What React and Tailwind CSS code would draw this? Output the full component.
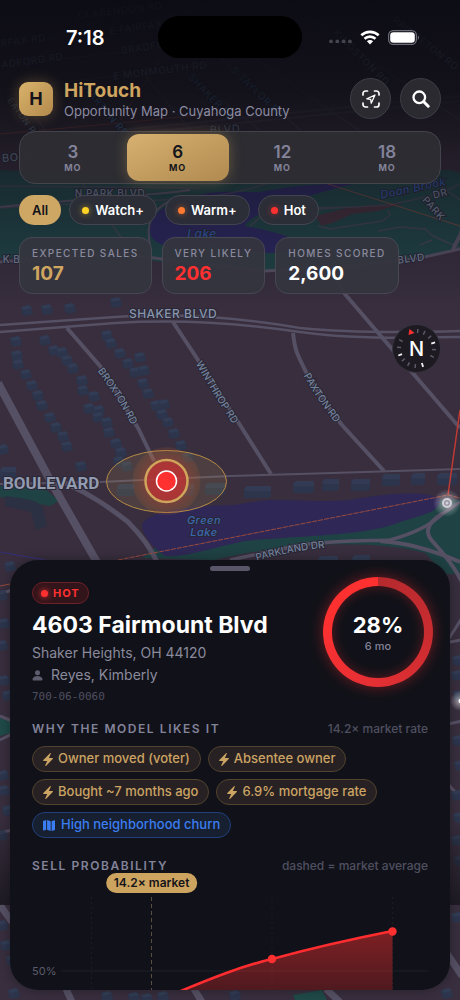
import React from "react";

const BUILDINGS = [
  [21, 305], [41, 304], [64, 303], [110, 297],
  [10, 336], [11, 350], [12, 359], [20, 369], [26, 380], [32, 390], [36, 400], [44, 412], [50, 422], [57, 431], [61, 441],
  [39, 335], [48, 345], [56, 347], [61, 355], [67, 363], [76, 375], [77, 385], [88, 391], [83, 403], [93, 405], [92, 412], [101, 417], [103, 427], [110, 438], [115, 447], [113, 456], [121, 461],
  [101, 330], [105, 338], [114, 348], [122, 358], [134, 352], [129, 367], [138, 365], [137, 378], [142, 388], [150, 400], [158, 399], [156, 409], [162, 417], [168, 428], [175, 440], [182, 452],
  [-3, 444], [75, 461], [4, 561], [-2, 468],
  [-4, 590], [-2, 618], [-4, 640], [-2, 675], [2, 690], [-3, 770], [-2, 785], [2, 805], [-4, 830],
  [452, 655], [451, 670], [453, 690], [452, 735], [454, 760], [451, 790], [453, 812], [451, 835], [454, 855],
  [-4, 920], [0, 940], [6, 955], [8, 988], [101, 991], [128, 992], [141, 993], [157, 991], [229, 990], [441, 988], [451, 912],
];

const LONG_BUILDINGS = [
  [244, 486, 27], [293, 481, 21], [322, 479, 17], [351, 479, 19], [382, 474, 18], [411, 473, 14], [437, 473, 20],
  [117, 484, 17], [205, 483, 20], [180, 484, 14], [0, 467, 16], [318, 556, 20], [352, 555, 18],
];

function MapLabel({ x, y, r = 0, size = 10, className = "fill-[#73839c]", italic, children }) {
  return (
    <text
      x={x}
      y={y}
      transform={`rotate(${r} ${x} ${y})`}
      fontSize={size}
      fontWeight="500"
      fontStyle={italic ? "italic" : "normal"}
      textAnchor="middle"
      dominantBaseline="central"
      letterSpacing="0.5"
      className={className}
      stroke="#2a2736"
      strokeWidth="2"
      paintOrder="stroke"
    >
      {children}
    </text>
  );
}

function CityMap() {
  return (
    <svg
      className="absolute inset-0 h-full w-full font-['Inter',sans-serif]"
      viewBox="0 0 460 1000"
      preserveAspectRatio="xMidYMin slice"
      role="img"
      aria-label="Map of Shaker Heights"
    >
      <defs>
        <linearGradient id="topFade" x1="0" y1="0" x2="0" y2="1">
          <stop offset="0" stopColor="#0b0b13" stopOpacity="0.96" />
          <stop offset="0.3" stopColor="#0d0d14" stopOpacity="0.86" />
          <stop offset="0.5" stopColor="#100f16" stopOpacity="0.56" />
          <stop offset="0.75" stopColor="#14131c" stopOpacity="0.3" />
          <stop offset="1" stopColor="#14131c" stopOpacity="0" />
        </linearGradient>
        <linearGradient id="lowFade" x1="0" y1="0" x2="0" y2="1">
          <stop offset="0" stopColor="#15141a" stopOpacity="0" />
          <stop offset="1" stopColor="#15141a" stopOpacity="0.75" />
        </linearGradient>
        <radialGradient id="pinGlow">
          <stop offset="0" stopColor="#ff3030" stopOpacity="0.6" />
          <stop offset="0.6" stopColor="#e0452c" stopOpacity="0.3" />
          <stop offset="1" stopColor="#c9662c" stopOpacity="0.12" />
        </radialGradient>
        <radialGradient id="whiteGlow">
          <stop offset="0.3" stopColor="#ffffff" stopOpacity="0.4" />
          <stop offset="1" stopColor="#ffffff" stopOpacity="0" />
        </radialGradient>
        <path id="broxton" d="M100 369C114 389 127 407 139 434" />
        <path id="winthrop" d="M198 362C212 385 225 408 242 432" />
        <path id="paxton" d="M306 374C316 392 326 406 343 428" />
        <path id="parkland" d="M256 558C280 551 305 546 334 544" />
      </defs>

      <rect width="460" height="1000" fill="#382e3e" />

      {/* parks and water */}
      <path d="M0 170L120 176L300 180L420 170L450 170L460 173V248L420 257L360 268L265 271C200 264 120 256 0 258Z" fill="#1f4447" />
      <path d="M315 216L350 207L403 203L378 211L352 214L335 222L322 226Z" fill="#43303d" />
      <path d="M360 182C320 184 290 186 260 192C230 192 215 190 195 196C165 202 148 216 150 232C152 248 180 250 215 246C240 252 285 258 300 246C300 238 270 230 244 226C256 210 300 198 360 182Z" fill="#2b2762" />
      <path d="M0 486L45 489L59 501L50 506L0 497Z" fill="#1f4244" />
      <path d="M142 558L165 540L280 532L440 500L460 500V574H445L425 553C380 540 290 541 215 560Z" fill="#1f4244" />
      <path d="M142 526C144 514 175 506 235 505C280 495 300 504 350 500C400 491 435 492 440 500C440 512 425 514 400 522C370 536 290 536 245 541C210 548 185 558 165 556C154 548 144 538 142 526Z" fill="#2f2856" />
      <path d="M0 718L10 722V733L0 736Z" fill="#1f4a47" />
      <path d="M293 995L322 990L327 1000H295Z" fill="#1f4a47" />
      <path d="M5 496C22 498 40 500 43 508L47 526L36 530L31 512L5 506Z" fill="#2b3043" />

      {/* minor streets */}
      <g fill="none" stroke="#4a4457" strokeWidth="1.5" opacity="0.8">
        <path d="M0 44L160 24M0 66L210 42M0 90L260 58M150 22L230 0M170 0L460 200M280 0L460 120M360 0L460 66M140 70L190 130M180 68L260 130M220 58L300 130M0 208C140 198 220 206 280 178M0 186L200 188" />
        <path d="M318 209L390 205C410 200 440 196 460 184M250 226L262 216L300 208L350 207M318 226L330 229L382 221L390 215L388 210M378 231L400 227L425 229L433 236L460 248M432 240L420 245" />
        <path d="M120 130L460 96M118 135L460 101" strokeWidth="2" />
        <path d="M20 95L130 250" />
      </g>
      <g fill="none" stroke="#565064">
        <path d="M0 207C100 197 150 196 190 190" strokeWidth="2" />
        <path d="M0 262L60 257L120 254L265 271L360 265L420 258L460 249" strokeWidth="3" />
        <path d="M150 246C146 225 150 210 172 200" strokeWidth="2" />
        <path d="M0 325L115 317C180 312 240 318 300 328C350 333 400 333 460 331M0 332L115 323C180 319 240 323 300 332C350 339 400 338 460 337" strokeWidth="2.5" />
        <path d="M67 328L100 366C115 390 128 412 138 428L154 461" strokeWidth="4" />
        <path d="M173 322L200 363L240 425L271 474" strokeWidth="4" />
        <path d="M293 333C295 350 296 352 306 372C320 396 330 410 342 425L384 471" strokeWidth="4" />
        <path d="M344 293L392 349L460 428" strokeWidth="4" />
        <path d="M0 484L100 482L230 476L300 474L460 469" strokeWidth="2" />
        <path d="M-2 383L50 480L98 564" strokeWidth="8" />
        <path d="M65 483C92 495 110 508 128 522C142 536 152 550 158 564" strokeWidth="5" />
        <path d="M230 560L300 545C340 540 370 541 390 540C412 534 430 526 442 514L460 502" strokeWidth="3.5" />
        <path d="M380 541C410 543 435 551 460 562M442 514C425 524 425 534 434 543C446 556 454 566 462 582" strokeWidth="4" />
        <path d="M0 594L12 590M0 716L12 721M0 740L12 734M0 833L12 830M448 640L462 618M450 642L462 640M448 724L462 721M448 784L462 800" strokeWidth="3" />
        <path d="M0 905L12 922M66 989L72 1002M194 989L202 1002M326 989L340 1002M446 952L462 976" strokeWidth="7" />
        <path d="M344 293L330 268M453 250C456 240 462 236 462 228" strokeWidth="4" />
      </g>

      {/* buildings */}
      <g fill="#2c354c">
        {BUILDINGS.map(([x, y], i) => (
          <g key={i} transform={`translate(${x} ${y})`}>
            <path d="M0 2L8 0L11 3L12 9L4 11L1 9Z" />
            <path d="M0 2L8 0L11 3L3 5Z" fill="#323c54" />
          </g>
        ))}
        {LONG_BUILDINGS.map(([x, y, w], i) => (
          <g key={i} transform={`translate(${x} ${y})`}>
            <path d={`M0 3L3 0H${w}V10L${w - 2} 12H0Z`} />
            <path d={`M0 3L3 0H${w}V5H1Z`} fill="#323b53" />
          </g>
        ))}
      </g>

      {/* transit lines */}
      <g fill="none" stroke="#9a4a3e" strokeWidth="1">
        <path d="M118 560L448 495L460 498" strokeDasharray="5 1" />
        <path d="M448 495L460 410" stroke="#c03a34" strokeWidth="1.5" />
        <path d="M328 184L460 226M0 134L130 122L230 112M120 120L160 60" opacity="0.7" />
        <path d="M0 552L50 561" stroke="#34307a" />
        <path d="M10 584L0 586" />
      </g>

      {/* labels */}
      <MapLabel x={120} y={10} r={-7}>CLARENDON RD</MapLabel>
      <MapLabel x={136} y={27} r={-8}>E FAIRFAX</MapLabel>
      <MapLabel x={23} y={40} r={-8}>RFAX RD</MapLabel>
      <MapLabel x={32} y={60} r={-8}>ADFORD RD</MapLabel>
      <MapLabel x={150} y={46} r={-8}>BRADFORD</MapLabel>
      <MapLabel x={160} y={70} r={-7}>E MONMOUTH RD</MapLabel>
      <MapLabel x={362} y={57} r={45}>KINGSTON RD</MapLabel>
      <MapLabel x={426} y={43} r={38}>PRINCETON RD</MapLabel>
      <MapLabel x={258} y={92} r={44} className="fill-[#4a78a8]">S TAYLOR RD</MapLabel>
      <MapLabel x={212} y={97} r={46} className="fill-[#4a78a8]">SHAKER RD</MapLabel>
      <MapLabel x={106} y={110} r={50} className="fill-[#4a78a8]">WARTON RD</MapLabel>
      <MapLabel x={24} y={118} r={54} size={9}>EATON RD</MapLabel>
      <MapLabel x={225} y={129} r={-3} size={11}>BLVD</MapLabel>
      <MapLabel x={18} y={157} r={-4} size={11}>BOUL</MapLabel>
      <MapLabel x={110} y={193}>N PARK BLVD</MapLabel>
      <MapLabel x={413} y={188} r={-12} size={11} italic className="fill-[#2b5aa8]">Doan Brook</MapLabel>
      <MapLabel x={202} y={233} size={12} italic className="fill-[#2d5ab0]">Lake</MapLabel>
      <MapLabel x={440} y={193} r={-16}>DR</MapLabel>
      <MapLabel x={434} y={208} r={48}>PARK</MapLabel>
      <MapLabel x={22} y={259}>K BLVD</MapLabel>
      <MapLabel x={411} y={258} r={-7}>BLVD</MapLabel>
      <MapLabel x={173} y={313} size={12} className="fill-[#8796ad]">SHAKER BLVD</MapLabel>
      <MapLabel x={204} y={520} size={11} italic className="fill-[#3a68ae]">Green</MapLabel>
      <MapLabel x={204} y={532} size={11} italic className="fill-[#3a68ae]">Lake</MapLabel>
      <text x="3" y="489" fontSize="17" fontWeight="700" className="fill-[#929bb0] font-['Roboto',sans-serif]" stroke="#2a2736" strokeWidth="2" paintOrder="stroke">
        BOULEVARD
      </text>
      <g fontSize="10" fontWeight="500" fill="#73839c" stroke="#2a2736" strokeWidth="2" paintOrder="stroke">
        <text dy="3"><textPath href="#broxton">BROXTON RD</textPath></text>
        <text dy="3"><textPath href="#winthrop">WINTHROP RD</textPath></text>
        <text dy="3"><textPath href="#paxton">PAXTON RD</textPath></text>
        <text dy="3"><textPath href="#parkland">PARKLAND DR</textPath></text>
      </g>

      <rect width="460" height="310" fill="url(#topFade)" />
      <rect y="820" width="460" height="85" fill="url(#lowFade)" />

      {/* selected home */}
      <ellipse cx="166.500" cy="481.500" rx="60" ry="31" fill="#c9a15a" fillOpacity="0.15" stroke="#b58a45" />
      <circle cx="166.500" cy="481" r="34" fill="url(#pinGlow)" />
      <circle cx="166.500" cy="481" r="21" fill="#b83336" fillOpacity="0.75" stroke="#cfa55c" strokeWidth="2.500" />
      <circle cx="166.500" cy="481" r="10" fill="#ff3030" stroke="#ffffff" strokeWidth="1.500" />

      {/* other places */}
      <circle cx="447" cy="503" r="14" fill="url(#whiteGlow)" />
      <circle cx="447" cy="503" r="4" fill="#9a97a5" stroke="#d2d0d8" strokeWidth="2" />
      <circle cx="447" cy="503" r="1.500" fill="#d2d0d8" />
      <circle cx="460" cy="701" r="10" fill="url(#whiteGlow)" />
      <circle cx="461" cy="701" r="2.500" fill="#ffffff" />
    </svg>
  );
}

function StatusBar() {
  return (
    <div className="relative flex h-[42px] items-center justify-between pl-[66px] pr-10">
      <span className="pt-[2px] text-[20px] leading-6 font-semibold text-white">7:18</span>
      <div className="absolute left-1/2 h-[42px] w-36 -translate-x-1/2 rounded-full bg-black" />
      <div className="flex items-center gap-2">
        <svg width="23" height="12" viewBox="0 0 23 12" fill="#45454f">
          <circle cx="2" cy="10.500" r="1.900" />
          <circle cx="8.300" cy="10.500" r="1.900" />
          <circle cx="14.600" cy="10.500" r="1.900" />
          <circle cx="20.900" cy="10.500" r="1.900" />
        </svg>
        <svg width="20" height="15" viewBox="0 0 20 15" fill="none" stroke="#fff" strokeWidth="2.600">
          <path d="M1.300 5.300C6.200 0.700 13.800 0.700 18.700 5.300" />
          <path d="M4.500 8.800C7.600 5.900 12.400 5.900 15.500 8.800" />
          <path d="M6.900 11.300C8.600 9.700 11.400 9.700 13.100 11.300L10 14.500Z" fill="#fff" stroke="none" />
        </svg>
        <svg width="32" height="15" viewBox="0 0 32 15" fill="none">
          <rect x="0.600" y="0.600" width="27.800" height="13.800" rx="4.600" stroke="#6c6c78" strokeWidth="1.200" />
          <rect x="2.200" y="2.200" width="24.600" height="10.600" rx="3.200" fill="#fff" />
          <path d="M29.800 5.200C31.400 6 31.400 9 29.800 9.800Z" fill="#6c6c78" />
        </svg>
      </div>
    </div>
  );
}

function RoundButton({ label, children }) {
  return (
    <button
      aria-label={label}
      className="flex size-[41px] items-center justify-center rounded-full border border-[#3e3e47] bg-[#2a2a30] text-white"
    >
      {children}
    </button>
  );
}

function Header() {
  return (
    <header className="flex items-center">
      <div className="flex size-[34px] items-center justify-center rounded-[9px] bg-linear-to-br from-[#d9b36c] to-[#b38a4c] text-[18px] leading-6 font-bold text-[#14141a] shadow-[0_0_14px_rgba(201,161,90,0.35)]">
        H
      </div>
      <div className="ml-[11px] flex-1">
        <h1 className="text-[19px] leading-6 font-bold text-[#cfa560]">HiTouch</h1>
        <p className="text-[13px] leading-4 text-[#8c8ca2]">Opportunity Map · Cuyahoga County</p>
      </div>
      <div className="flex gap-[9px]">
        <RoundButton label="Scan location">
          <svg width="18" height="18" viewBox="0 0 18 18" fill="none" stroke="currentColor" strokeWidth="1.700" strokeLinecap="round" strokeLinejoin="round">
            <path d="M1 5V3.500A2.500 2.500 0 0 1 3.500 1H5.500M12.500 1H14.500A2.500 2.500 0 0 1 17 3.500V5M17 13V14.500A2.500 2.500 0 0 1 14.500 17H12.500M5.500 17H3.500A2.500 2.500 0 0 1 1 14.500V13" />
            <path d="M13 5L4.800 8.800L8.700 9.300L9.200 13.200Z" strokeWidth="1.300" />
          </svg>
        </RoundButton>
        <RoundButton label="Search">
          <svg width="18" height="18" viewBox="0 0 18 18" fill="none" stroke="currentColor" strokeLinecap="round">
            <circle cx="7.300" cy="7.300" r="5.800" strokeWidth="2.300" />
            <path d="M12 12L16.200 16.200" strokeWidth="3" />
          </svg>
        </RoundButton>
      </div>
    </header>
  );
}

function Horizon() {
  return (
    <div className="mt-[12px] grid grid-cols-4 gap-[3px] rounded-[16px] border border-[#43434c] bg-[#2d2d33]/95 p-[2px]">
      {["3", "6", "12", "18"].map((n) => (
        <button
          key={n}
          aria-pressed={n === "6"}
          className={
            n === "6"
              ? "flex h-[47px] flex-col items-center justify-center rounded-[12px] bg-linear-to-br from-[#d6b170] to-[#b08a50] text-[#14141a] shadow-[0_0_14px_rgba(201,161,90,0.4)]"
              : "flex h-[47px] flex-col items-center justify-center text-[#83839a]"
          }
        >
          <span className="text-[17px] leading-5 font-semibold">{n}</span>
          <span className="text-[9px] leading-3 font-bold tracking-[1px]">MO</span>
        </button>
      ))}
    </div>
  );
}

const FILTERS = [
  { label: "Watch+", dot: "bg-[#ffd426] shadow-[0_0_6px_#ffd42699]" },
  { label: "Warm+", dot: "bg-[#ff7a30] shadow-[0_0_6px_#ff7a3099]" },
  { label: "Hot", dot: "bg-[#ff3030] shadow-[0_0_6px_#ff303099]" },
];

function Filters() {
  return (
    <div className="mt-[11px] flex gap-2">
      <button aria-pressed="true" className="h-[30px] rounded-full bg-[#cfa765] px-[13px] text-[13px] leading-4 font-semibold text-[#14141a]">
        All
      </button>
      {FILTERS.map((f) => (
        <button
          key={f.label}
          className="flex h-[30px] items-center gap-[6px] rounded-full border border-[#44444f] bg-[#2c2e37]/95 px-3 text-[13px] leading-4 font-semibold text-white"
        >
          <span className={"size-[7px] rounded-full " + f.dot} />
          {f.label}
        </button>
      ))}
    </div>
  );
}

const STATS = [
  { label: "EXPECTED SALES", value: "107", color: "text-[#cfa560]" },
  { label: "VERY LIKELY", value: "206", color: "text-[#ff3030]" },
  { label: "HOMES SCORED", value: "2,600", color: "text-white" },
];

function Stats() {
  return (
    <dl className="mt-[12px] flex gap-[10px]">
      {STATS.map((s) => (
        <div key={s.label} className="h-[57px] rounded-[13px] border border-[#474751] bg-[#34353e]/95 px-3 pt-2">
          <dt className="text-[10px] leading-[14px] font-medium tracking-[0.14em] text-[#8a8a9e]">{s.label}</dt>
          <dd className={"mt-[2px] text-[19px] leading-6 font-bold " + s.color}>{s.value}</dd>
        </div>
      ))}
    </dl>
  );
}

function Compass() {
  return (
    <button aria-label="North" className="mt-[30px] size-[49px] self-end rounded-full">
      <svg width="49" height="49" viewBox="0 0 49 49">
        <circle cx="24.500" cy="24.500" r="24" fill="#1d1a22" stroke="#37333f" />
        <g stroke="#5d5a68" strokeWidth="1.500">
          {[15, 37, 60, 105, 128, 195, 218, 240, 285, 308].map((a) => (
            <path key={a} d="M24.500 5V9" transform={`rotate(${a - 11} 24.500 24.500)`} />
          ))}
        </g>
        <g stroke="#f2f2f5" strokeWidth="1.800">
          {[72, 160, 249].map((a) => (
            <path key={a} d="M24.500 5V9" transform={`rotate(${a} 24.500 24.500)`} />
          ))}
        </g>
        <path d="M16.500 11L17.500 5L22.500 9Z" fill="#ff3030" />
        <text x="24.500" y="32" textAnchor="middle" fontSize="20" fontWeight="500" fill="#fff">N</text>
      </svg>
    </button>
  );
}

function Bolt() {
  return (
    <svg width="10" height="13" viewBox="0 0 10 13" fill="currentColor">
      <path d="M7 0.200L0.300 7C0 7.400 0.200 7.900 0.700 7.900H4.200L2.300 12.200C2.100 12.900 2.700 13.200 3.200 12.800L9.700 6C10.100 5.500 9.900 5.100 9.400 5.100H5.900L7.800 0.800C8 0.100 7.500 -0.200 7 0.200Z" />
    </svg>
  );
}

function FoldedMap() {
  return (
    <svg width="12" height="11" viewBox="0 0 12 11" fill="currentColor">
      <path d="M0 1.600C0 1.200 0.200 0.900 0.600 0.700L3.200 0V9.700L0.800 10.600C0.400 10.800 0 10.600 0 10.100ZM4.100 0L7.700 1.300V11L4.100 9.700ZM8.600 1.300L11.200 0.300C11.600 0.200 12 0.400 12 0.900V9.400C12 9.800 11.800 10.100 11.400 10.300L8.600 11Z" />
    </svg>
  );
}

const REASONS = ["Owner moved (voter)", "Absentee owner", "Bought ~7 months ago", "6.9% mortgage rate"];

function SectionTitle({ title, note }) {
  return (
    <div className="flex items-center justify-between">
      <h3 className="text-[12px] leading-4 font-semibold tracking-[0.13em] text-[#83839a]">{title}</h3>
      <span className="text-[12px] leading-4 font-medium text-[#4f4f60]">{note}</span>
    </div>
  );
}

function Chart() {
  return (
    <div className="relative -mt-px">
      <svg className="block w-full" viewBox="0 0 396 117" role="img" aria-label="Sell probability over time">
        <defs>
          <linearGradient id="area" x1="0" y1="0" x2="0" y2="1">
            <stop offset="0" stopColor="#ff3030" stopOpacity="0.46" />
            <stop offset="1" stopColor="#ff3030" stopOpacity="0.26" />
          </linearGradient>
        </defs>
        <path d="M29 98H396" stroke="#1f2028" />
        <path d="M59.500 24V117M240 24V117M360.500 24V117" stroke="#1b1c24" strokeDasharray="2 3" />
        <path d="M119.500 24V117" stroke="#5a4d44" strokeDasharray="4 3" />
        <path d="M150 117C180 105 210 93 240 86C280 75 320 66 360.500 58V117Z" fill="url(#area)" />
        <path d="M144 120C180 105 210 93 240 86C280 75 320 66 360.500 58" fill="none" stroke="#ff2d2f" strokeWidth="2.600" />
        <circle cx="240" cy="86" r="4.200" fill="#ff3030" />
        <circle cx="360.500" cy="58.500" r="4.200" fill="#ff3030" />
        <text x="0" y="102" fontSize="11" fill="#5b5b6b">50%</text>
      </svg>
      <span className="absolute top-0 left-[30.200%] -translate-x-1/2 rounded-full bg-[#cda45f] px-2 text-[12px] leading-5 font-semibold whitespace-nowrap text-[#14141a]">
        14.2× market
      </span>
    </div>
  );
}

function Sheet() {
  return (
    <section className="mx-[10px] mt-auto mb-[10px] overflow-hidden rounded-[28px] bg-[#111219] px-[22px] pt-[6px] shadow-[0_0_12px_rgba(0,0,0,0.3)]">
      <div className="mx-auto h-[5px] w-10 rounded-full bg-[#5a566a]" />
      <div className="flex items-start justify-between">
        <div className="pt-[11px]">
          <span className="inline-flex h-[22px] items-center gap-[5px] rounded-full border border-[#6e2027] bg-[#32151b] px-2 align-top text-[11px] font-bold tracking-[1px] text-[#ff3030]">
            <span className="size-[7px] rounded-full bg-[#ff3030] shadow-[0_0_6px_#ff3030]" />
            HOT
          </span>
          <h2 className="mt-[4px] text-[23px] leading-[30px] font-bold text-white">4603 Fairmount Blvd</h2>
          <p className="mt-[3px] text-[14px] leading-5 text-[#8a8a9c]">Shaker Heights, OH 44120</p>
          <p className="mt-[2px] flex items-center gap-2 text-[14px] leading-5 text-[#8a8a9c]">
            <svg width="11" height="11" viewBox="0 0 11 11" fill="#5f5c70">
              <circle cx="5.500" cy="2.700" r="2.500" />
              <path d="M0.500 9.600C0.500 7.200 2.800 6 5.500 6S10.500 7.200 10.500 9.600C10.500 10.200 10.100 10.500 9.600 10.500H1.400C0.900 10.500 0.500 10.200 0.500 9.600Z" />
            </svg>
            Reyes, Kimberly
          </p>
          <p className="mt-[4px] font-['DejaVu_Sans_Mono',monospace] text-[11px] leading-4 text-[#4f4f60]">700-06-0060</p>
        </div>
        <div className="-mr-[5px] mt-[6px] size-[110px] rounded-full bg-[conic-gradient(#b52a2e,#c92c30_25%,#e83034_55%,#ff3030_80%)] p-[9px] shadow-[0_0_14px_rgba(255,48,48,0.4)]">
          <div className="flex h-full w-full flex-col items-center justify-center rounded-full bg-[#111219] shadow-[inset_0_0_12px_rgba(255,48,48,0.3)]">
            <span className="text-[22px] leading-7 font-bold text-white">28%</span>
            <span className="text-[11px] leading-[14px] font-medium text-[#83839a]">6 mo</span>
          </div>
        </div>
      </div>
      <div className="mt-[16px]">
        <SectionTitle title="WHY THE MODEL LIKES IT" note="14.2× market rate" />
      </div>
      <ul className="mt-[9px] flex flex-wrap gap-[7px]">
        {REASONS.map((r) => (
          <li key={r} className="flex h-[26px] items-center gap-[5px] rounded-full border border-[#51432f] bg-[#282123] px-[10px] text-[13px] font-medium text-[#cba463]">
            <Bolt />
            {r}
          </li>
        ))}
        <li className="flex h-[26px] items-center gap-[6px] rounded-full border border-[#213f7c] bg-[#172031] px-[10px] text-[13px] font-medium text-[#3b7df0]">
          <FoldedMap />
          High neighborhood churn
        </li>
      </ul>
      <div className="mt-[20px]">
        <SectionTitle title="SELL PROBABILITY" note="dashed = market average" />
      </div>
      <Chart />
    </section>
  );
}

export default function App() {
  return (
    <div className="relative flex min-h-screen flex-col overflow-hidden bg-[#382e3e] font-['Inter',sans-serif]">
      <CityMap />
      <main className="relative flex flex-1 flex-col pt-4">
        <StatusBar />
        <div className="mt-5 flex flex-col px-[19px]">
          <Header />
          <Horizon />
          <Filters />
          <Stats />
          <Compass />
        </div>
        <Sheet />
      </main>
    </div>
  );
}
